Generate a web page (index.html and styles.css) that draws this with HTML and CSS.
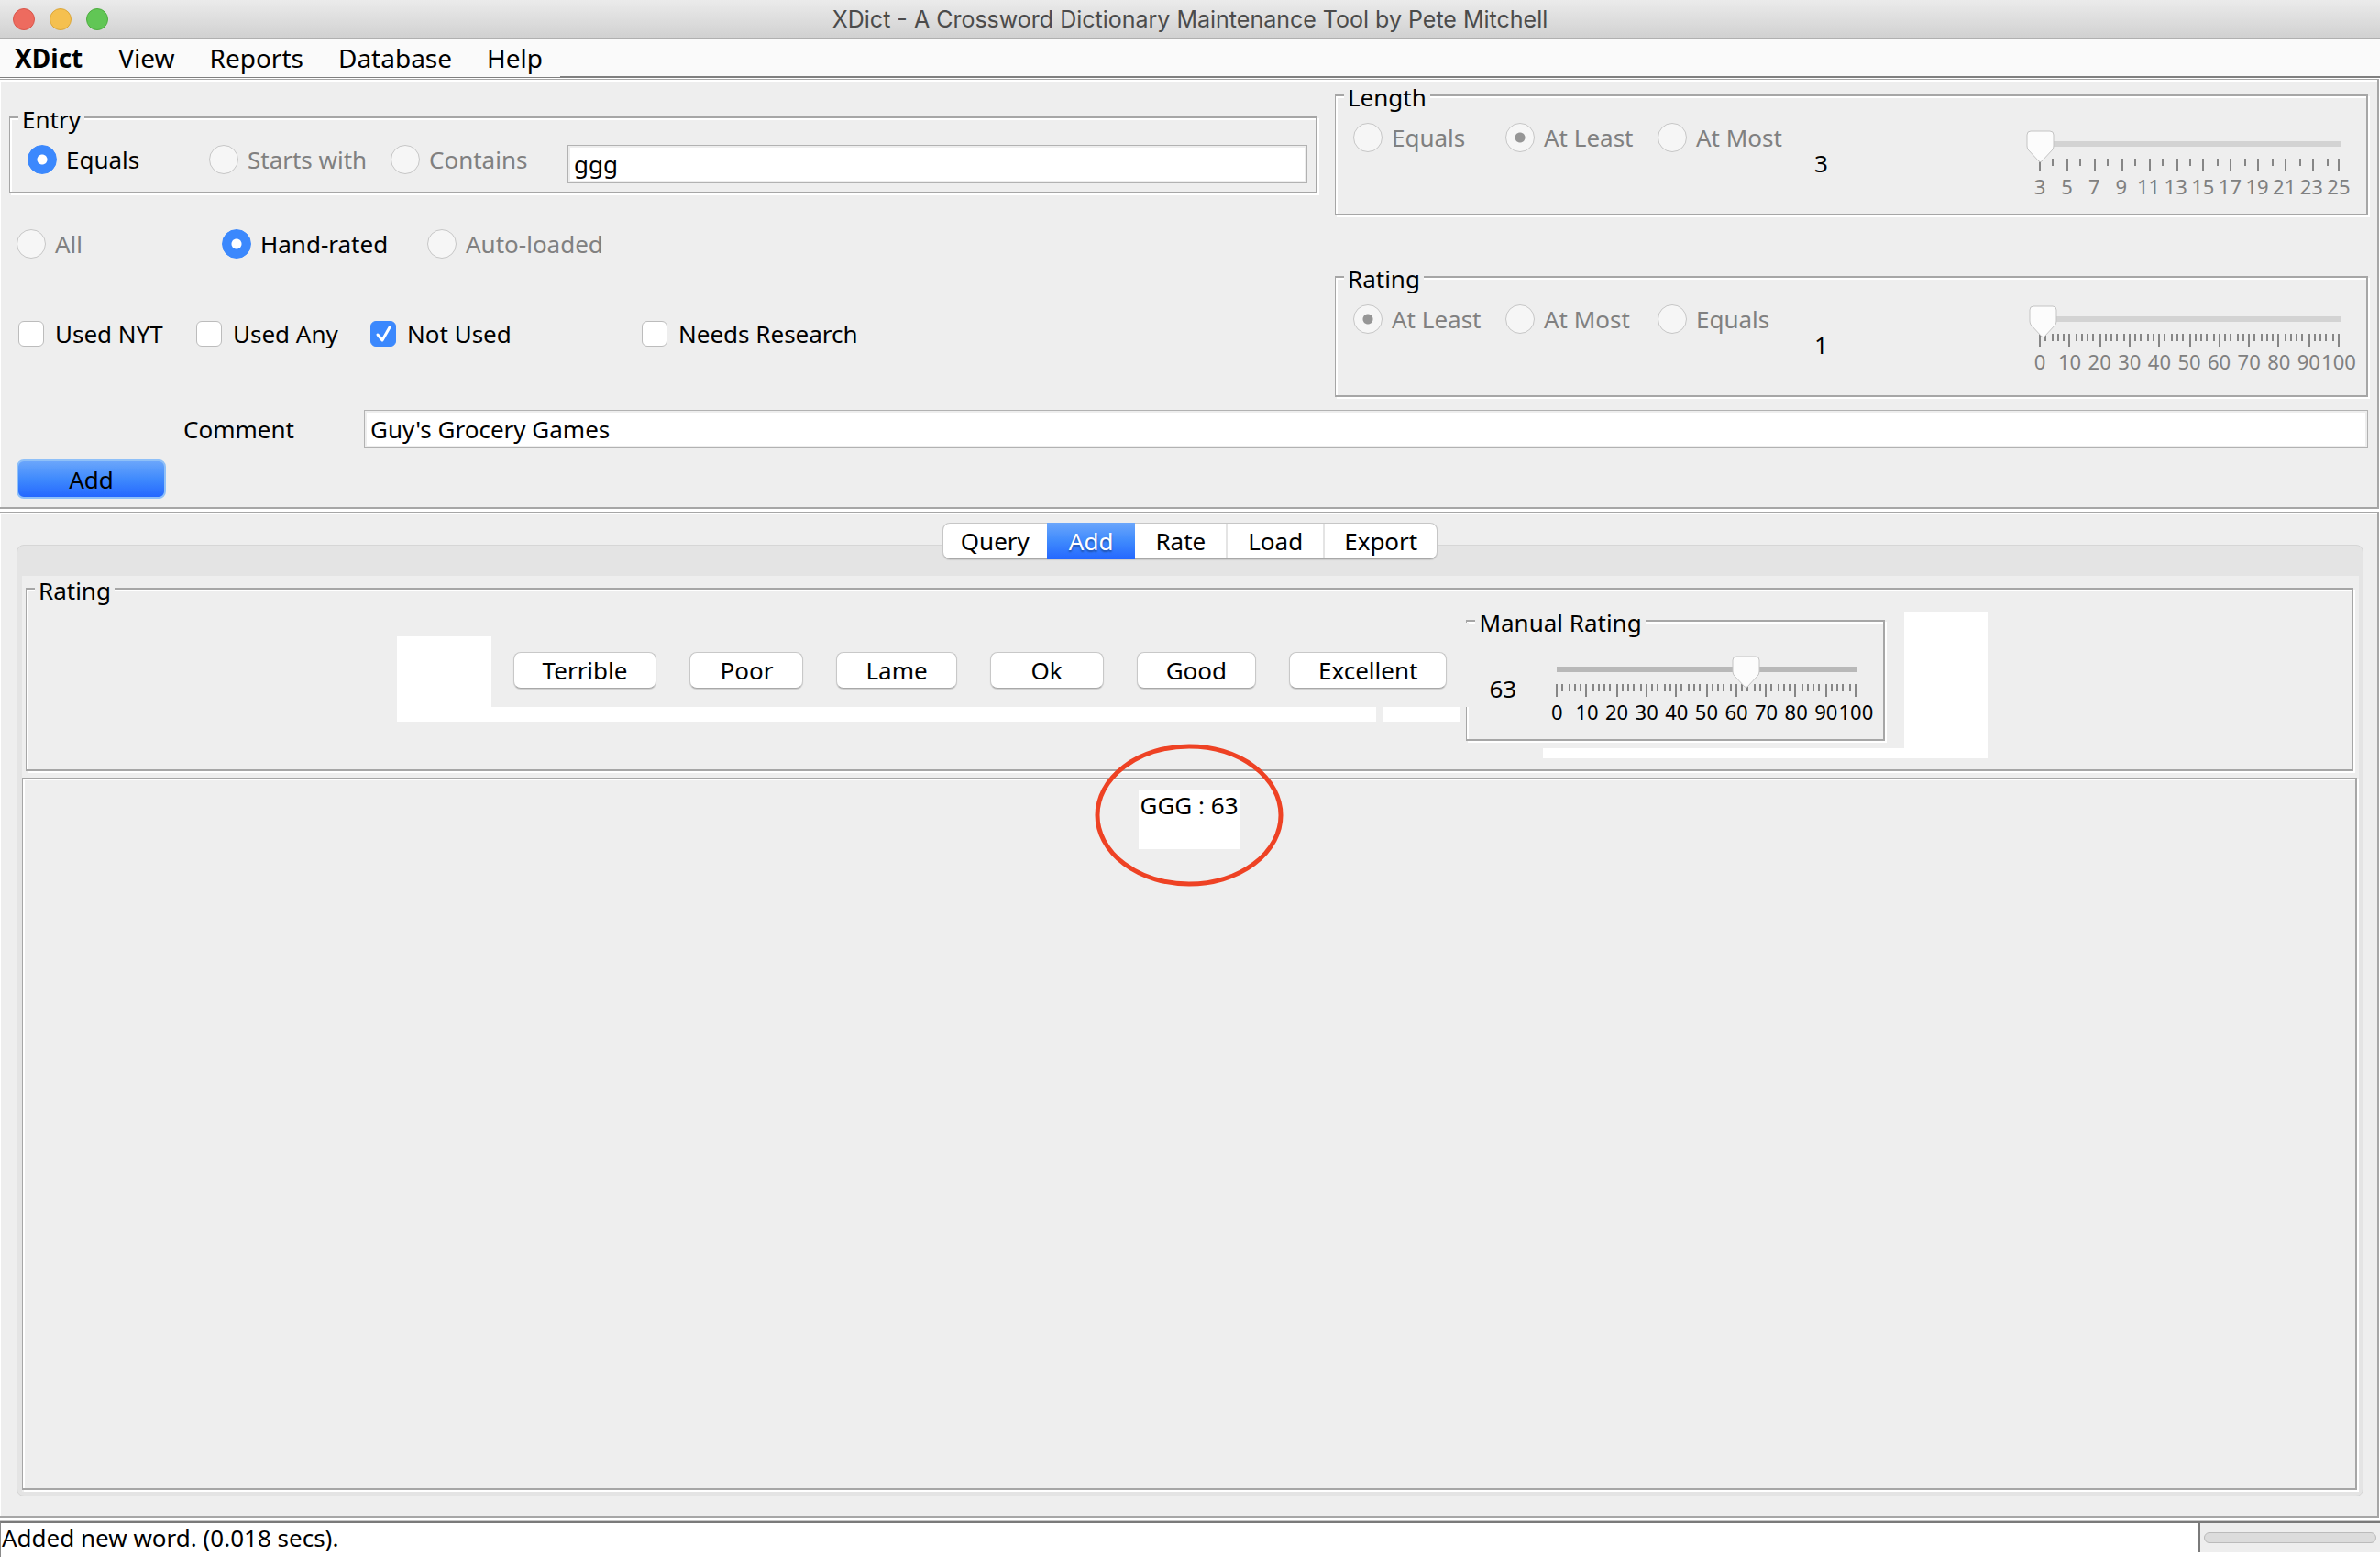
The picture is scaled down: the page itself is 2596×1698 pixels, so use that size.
FILE: index.html
```html
<!DOCTYPE html>
<html lang="en">
<head>
<meta charset="utf-8">
<title>XDict - A Crossword Dictionary Maintenance Tool by Pete Mitchell</title>
<link rel="stylesheet" href="styles.css">
</head>
<body>
<svg class="defs" aria-hidden="true">
  <symbol id="ticks-hundred" viewBox="0 0 328 14">
    <path d="M1 0v14M33 0v14M67 0v14M99 0v14M131 0v14M165 0v14M197 0v14M229 0v14M261 0v14M295 0v14M327 0v14M7 0v8M15 0v8M21 0v8M27 0v8M41 0v8M47 0v8M53 0v8M59 0v8M73 0v8M79 0v8M85 0v8M93 0v8M105 0v8M111 0v8M119 0v8M125 0v8M137 0v8M145 0v8M151 0v8M157 0v8M171 0v8M177 0v8M183 0v8M191 0v8M203 0v8M209 0v8M217 0v8M223 0v8M235 0v8M243 0v8M249 0v8M255 0v8M269 0v8M275 0v8M281 0v8M287 0v8M301 0v8M307 0v8M313 0v8M321 0v8"/>
  </symbol>
</svg>

<header class="titlebar">
  <div class="lights">
    <button class="light close" aria-label="Close"></button>
    <button class="light minimize" aria-label="Minimize"></button>
    <button class="light zoom" aria-label="Zoom"></button>
  </div>
  <h1 class="title">XDict - A Crossword Dictionary Maintenance Tool by Pete Mitchell</h1>
  <div class="lights-balance"></div>
</header>

<nav class="menubar">
  <button class="menu app">XDict</button>
  <button class="menu">View</button>
  <button class="menu">Reports</button>
  <button class="menu">Database</button>
  <button class="menu">Help</button>
  <span class="menu-fill"></span>
</nav>

<section class="panel filters">
  <div class="filter-grid">
    <div class="filter-left">
      <fieldset class="etched">
        <legend>Entry</legend>
        <div class="entry-row">
          <label class="option"><input type="radio" name="entry" checked><span>Equals</span></label>
          <label class="option"><input type="radio" name="entry" disabled><span>Starts with</span></label>
          <label class="option"><input type="radio" name="entry" disabled><span>Contains</span></label>
          <input class="text" type="text" value="ggg" aria-label="Entry">
        </div>
      </fieldset>
      <div class="source-row">
        <label class="option"><input type="radio" name="source" disabled><span>All</span></label>
        <label class="option"><input type="radio" name="source" checked><span>Hand-rated</span></label>
        <label class="option"><input type="radio" name="source" disabled><span>Auto-loaded</span></label>
      </div>
      <div class="usage-row">
        <label class="option"><input type="checkbox"><span>Used NYT</span></label>
        <label class="option"><input type="checkbox"><span>Used Any</span></label>
        <label class="option"><input type="checkbox" checked><span>Not Used</span></label>
        <label class="option"><input type="checkbox"><span>Needs Research</span></label>
      </div>
    </div>
    <div class="filter-right">
      <fieldset class="etched">
        <legend>Length</legend>
        <div class="range-row">
          <div class="range-options">
            <label class="option"><input type="radio" name="length" disabled><span>Equals</span></label>
            <label class="option"><input type="radio" name="length" disabled checked><span>At Least</span></label>
            <label class="option"><input type="radio" name="length" disabled><span>At Most</span></label>
          </div>
          <output class="value">3</output>
          <div class="slider">
            <input type="range" min="3" max="25" value="3" disabled aria-label="Length">
            <svg class="ticks" viewBox="0 0 328 14" aria-hidden="true"><path d="M1 0v14M31 0v14M61 0v14M91 0v14M121 0v14M151 0v14M179 0v14M209 0v14M239 0v14M269 0v14M299 0v14M327 0v14M15 0v8M45 0v8M75 0v8M105 0v8M135 0v8M165 0v8M195 0v8M225 0v8M255 0v8M285 0v8M315 0v8"/></svg>
            <div class="scale"><span>3</span><span>5</span><span>7</span><span>9</span><span>11</span><span>13</span><span>15</span><span>17</span><span>19</span><span>21</span><span>23</span><span>25</span></div>
          </div>
        </div>
      </fieldset>
      <fieldset class="etched">
        <legend>Rating</legend>
        <div class="range-row">
          <div class="range-options">
            <label class="option"><input type="radio" name="rating" disabled checked><span>At Least</span></label>
            <label class="option"><input type="radio" name="rating" disabled><span>At Most</span></label>
            <label class="option"><input type="radio" name="rating" disabled><span>Equals</span></label>
          </div>
          <output class="value">1</output>
          <div class="slider raised">
            <input type="range" min="0" max="100" value="1" disabled aria-label="Rating">
            <svg class="ticks" aria-hidden="true"><use href="#ticks-hundred"/></svg>
            <div class="scale"><span>0</span><span>10</span><span>20</span><span>30</span><span>40</span><span>50</span><span>60</span><span>70</span><span>80</span><span>90</span><span>100</span></div>
          </div>
        </div>
      </fieldset>
    </div>
  </div>
  <div class="comment-row">
    <label for="comment">Comment</label>
    <input class="text" id="comment" type="text" value="Guy's Grocery Games">
  </div>
  <button class="submit">Add</button>
</section>

<main class="panel work">
  <div class="tabs" role="tablist">
    <button class="tab" role="tab">Query</button>
    <button class="tab active" role="tab" aria-selected="true">Add</button>
    <button class="tab" role="tab">Rate</button>
    <button class="tab" role="tab">Load</button>
    <button class="tab" role="tab">Export</button>
  </div>
  <div class="pane">
    <div class="pane-body">
      <fieldset class="etched rating-box">
        <legend>Rating</legend>
        <div class="rating-row">
          <div class="scores">
            <div class="scores-top">
              <div class="blank-block"></div>
              <div class="score-buttons">
                <button class="push">Terrible</button>
                <button class="push">Poor</button>
                <button class="push">Lame</button>
                <button class="push">Ok</button>
                <button class="push">Good</button>
                <button class="push">Excellent</button>
              </div>
            </div>
            <div class="scores-strip"><span></span><span></span></div>
          </div>
          <div class="manual-area">
            <fieldset class="etched manual">
              <legend>Manual Rating</legend>
              <div class="manual-row">
                <output class="value">63</output>
                <div class="slider">
                  <input type="range" min="0" max="100" value="63" aria-label="Manual Rating">
                  <svg class="ticks" aria-hidden="true"><use href="#ticks-hundred"/></svg>
                  <div class="scale"><span>0</span><span>10</span><span>20</span><span>30</span><span>40</span><span>50</span><span>60</span><span>70</span><span>80</span><span>90</span><span>100</span></div>
                </div>
              </div>
            </fieldset>
            <div class="manual-strip"></div>
          </div>
          <div class="blank-column"></div>
        </div>
      </fieldset>
      <div class="results">
        <p class="result">GGG : 63
          <svg class="mark" viewBox="0 0 206 156" aria-hidden="true"><ellipse cx="103" cy="78" rx="100" ry="75" fill="none" stroke="#ee4224" stroke-width="5"/></svg>
        </p>
      </div>
    </div>
  </div>
</main>

<footer class="status">
  <div class="message" role="status">Added new word. (0.018 secs).</div>
  <div class="progress-well"><div class="progress" role="progressbar" aria-label="Progress"></div></div>
</footer>
</body>
</html>
```
FILE: styles.css
```css
* { box-sizing: border-box; }

body {
  margin: 0;
  min-height: 100vh;
  display: flex;
  flex-direction: column;
  background: #fff;
  color: #000;
  font: 26px/32px "Noto Sans", sans-serif;
}

button, input { font: inherit; color: inherit; margin: 0; }
button { padding: 0; border: 0; background: none; }
.defs { position: absolute; width: 0; height: 0; }

/* Title bar */
.titlebar {
  display: flex;
  align-items: center;
  justify-content: space-between;
  height: 42px;
  padding: 0 14px;
  background: linear-gradient(#ebebeb, #d1d1d1);
  border-bottom: 1px solid #b0b0b0;
}
.lights, .lights-balance { display: flex; gap: 16px; width: 104px; }
.light { width: 24px; height: 24px; border-radius: 50%; border: 1px solid; }
.close { background: #ed6b5f; border-color: #d9564b; }
.minimize { background: #f5c04f; border-color: #dba73b; }
.zoom { background: #61c655; border-color: #4dad3f; }
.title { margin: 0; color: #4b4b4b; font: 400 25px/32px Inter, sans-serif; }

/* Menu bar */
.menubar {
  display: flex;
  height: 43px;
  margin-bottom: 1px;
  background: #fafafa;
  border-bottom: 1px solid #7f7f7f;
}
.menu { padding: 0 19px; font-size: 28px; }
.app { padding: 0 20px 0 16px; font-weight: 700; }
.menu-fill { flex: 1; border-bottom: 1px solid #7f7f7f; }

/* Etched panels */
.panel {
  margin-right: 1px;
  background: #eee;
  border: solid #a6a6a6;
  border-width: 1px 2px 2px 0;
  box-shadow: inset 1px 2px #fff;
}
.etched {
  min-width: 0;
  margin: 0;
  padding: 0;
  border: 2px solid #a6a6a6;
  border-left-width: 1px;
  box-shadow: 2px 2px #fff, inset 2px 2px #fff;
}
legend {
  height: 28px;
  margin-left: 9px;
  padding: 2px 4px 0;
  background: #eee;
  line-height: 28px;
}

/* Radio buttons, tick boxes and text fields */
.option { display: flex; align-items: center; white-space: nowrap; }
.option input { appearance: none; flex: none; }
.option input:disabled + span { color: #808080; }
input[type="radio"] {
  width: 32px;
  height: 32px;
  margin-right: 10px;
  border-radius: 50%;
  border: 1px solid #c6c6c6;
  background: #f6f6f6;
}
input[type="radio"]:checked {
  border-color: #3b88fd;
  background: radial-gradient(circle, #fff 5px, #3b88fd 6px);
}
input[type="radio"]:checked:disabled {
  border-color: #c6c6c6;
  background: radial-gradient(circle, #969696 5px, #f6f6f6 6px);
}
input[type="checkbox"] {
  width: 28px;
  height: 28px;
  margin-right: 12px;
  border: 1px solid #bcbcbc;
  border-radius: 6px;
  background: #fff;
}
input[type="checkbox"]:checked {
  border-color: #3b88fd;
  background: #3b88fd url("data:image/svg+xml,%3Csvg xmlns='http://www.w3.org/2000/svg' viewBox='0 0 26 26'%3E%3Cpath d='M7 14l5 6L20 6' fill='none' stroke='white' stroke-width='3' stroke-linecap='round' stroke-linejoin='round'/%3E%3C/svg%3E");
}
.text {
  min-width: 0;
  height: 42px;
  padding: 0 6px;
  border: 1px solid #b2b2b2;
  border-radius: 0;
  background: #fff;
  box-shadow: inset 0 0 0 2px #eee;
}

/* Filters */
.filters { padding: 3px 10px 9px; margin-bottom: 3px; }
.filter-grid {
  display: grid;
  grid-template-columns: 1427fr 1127fr;
  gap: 19px;
}
.filter-left { padding-top: 24px; }
.entry-row {
  display: grid;
  grid-template-columns: 198px 198px 193px 1fr;
  align-items: start;
  padding: 16px 9px 9px 19px;
}
.source-row {
  display: grid;
  grid-template-columns: 224px 224px 1fr;
  margin-top: 39px;
  padding-left: 8px;
}
.usage-row {
  display: grid;
  grid-template-columns: 194px 190px 296px 1fr;
  margin-top: 66px;
  padding-left: 10px;
}
.filter-right { display: flex; flex-direction: column; gap: 53px; }
.range-row { display: flex; height: 115px; padding: 0 29px 0 19px; }
.range-options {
  display: grid;
  grid-template-columns: repeat(3, 166px);
  align-items: start;
  padding-top: 16px;
}
.value { flex: 1; padding: 46px 0 0 5px; line-height: 28px; }
.comment-row {
  display: flex;
  align-items: center;
  margin-top: 14px;
  padding-left: 190px;
}
.comment-row label { width: 197px; }
.comment-row .text { flex: 1; }
.submit {
  display: block;
  width: 163px;
  height: 43px;
  margin: 12px 0 0 8px;
  border: 2px solid #8fc0f8;
  border-radius: 8px;
  background: linear-gradient(#6ba6fb, #3f8afd 50%, #2467ff);
}

/* Sliders */
.slider { flex: none; width: 328px; padding-top: 25px; }
.raised { padding-top: 18px; }
.slider input {
  appearance: none;
  display: block;
  position: relative;
  z-index: 1;
  width: 357px;
  height: 28px;
  margin: 0 -14px 2px;
  background: linear-gradient(#b8b8b8, #b8b8b8) center / 328px 6px no-repeat;
}
.slider input:disabled { background-image: linear-gradient(#d3d3d3, #d3d3d3); }
.slider input::-webkit-slider-runnable-track { height: 6px; }
.slider input::-webkit-slider-thumb {
  appearance: none;
  width: 31px;
  height: 36px;
  margin-top: -12px;
  background: url("data:image/svg+xml,%3Csvg xmlns='http://www.w3.org/2000/svg' viewBox='0 0 31 36'%3E%3Cpath d='M5 1h21q4 0 4 4v12q0 2-1 4L17 34q-1.500 1-3 0L2 21q-1-2-1-4V5q0-4 4-4z' fill='%23fcfcfc' stroke='%23c4c4c4'/%3E%3C/svg%3E");
}
.ticks {
  display: block;
  width: 328px;
  height: 14px;
  fill: none;
  stroke: #868686;
  stroke-width: 2px;
}
.scale {
  display: flex;
  justify-content: space-between;
  margin: 3px 1px 0;
  font-size: 22px;
  line-height: 26px;
}
.scale span { display: flex; justify-content: center; width: 0; }
.slider input:disabled ~ .scale { color: #808080; }

/* Tabs */
.work {
  flex: 1;
  display: flex;
  flex-direction: column;
  padding: 11px 15px 21px 18px;
}
.tabs {
  position: relative;
  z-index: 1;
  align-self: center;
  display: flex;
  height: 40px;
  margin-bottom: -16px;
  border: 1px solid #c6c6c6;
  border-bottom-color: #a8a8a8;
  border-radius: 8px;
  background: #fff;
  box-shadow: 0 1px 1px #ccc;
}
.tab { padding: 0 22px; border-left: 2px solid #e4e4e4; }
.tab:first-child { padding: 0 19px; border-left: 0; }
.tab:last-child { padding: 0 21px; }
.tab.active {
  margin: -1px 0;
  padding: 0 24px;
  border-left: 0;
  color: #fff;
  background: linear-gradient(#6ba6fb, #3f8afd 50%, #2467ff);
  text-shadow: 0 2px 2px #1d4fa8;
}
.active + .tab { border-left: 0; }
.pane {
  flex: 1;
  display: flex;
  padding: 33px 4px 4px 5px;
  border: 1px solid #d6d6d6;
  border-radius: 8px;
  background: #e4e4e4;
}
.pane-body { flex: 1; display: flex; flex-direction: column; background: #eee; }

/* Rating controls */
.rating-box { margin: 0 6px 0 4px; }
.rating-row {
  display: flex;
  justify-content: center;
  padding: 7px 0 12px 7px;
}
.scores { padding-top: 31px; }
.scores-top { display: flex; }
.blank-block { width: 103px; background: #fff; }
.score-buttons { display: flex; gap: 36px; padding: 17px 21px 20px 24px; }
.push {
  min-width: 124px;
  height: 40px;
  padding: 0 31px;
  border: 1px solid #c8c8c8;
  border-bottom-color: #a8a8a8;
  border-radius: 8px;
  background: #fff;
  box-shadow: 0 1px 1px #ccc;
}
.scores-strip { display: flex; gap: 7px; height: 16px; padding-right: 7px; }
.scores-strip span { flex: 1; background: #fff; }
.scores-strip span:last-child { flex: none; width: 84px; }
.manual-area { width: 478px; }
.manual { position: relative; width: 457px; }
.manual::before {
  content: "";
  position: absolute;
  left: -1px;
  top: -12px;
  width: 3px;
  height: 92px;
  background: #eee;
}
.manual-row { display: flex; height: 115px; padding: 0 29px 0 22px; }
.manual-row .value { padding-left: 2px; }
.manual-strip { height: 11px; margin: 8px 0 0 84px; background: #fff; }
.blank-column { width: 91px; margin-top: 4px; background: #fff; }

/* Results */
.results {
  flex: 1;
  margin: 7px 2px 2px 0;
  padding-top: 13px;
  border: solid #a6a6a6;
  border-width: 1px 2px 2px 1px;
  box-shadow: 2px 2px #fff, inset 2px 2px #fff;
}
.result {
  position: relative;
  width: fit-content;
  margin: 0 auto;
  padding: 0 1px 32px;
  background: #fff;
}
.mark {
  position: absolute;
  top: -51px;
  left: calc(50% - 103px);
  width: 206px;
  height: 156px;
}

/* Status bar */
.status {
  display: flex;
  gap: 1px;
  height: 39px;
  margin-top: 4px;
}
.message {
  flex: 1;
  padding-left: 1px;
  border-top: 2px solid #7a7a7a;
  border-left: 1px solid #8a8a8a;
  box-shadow: 0 -1px #c8c8c8;
}
.progress-well {
  width: 198px;
  height: 34px;
  padding: 10px 4px 0;
  background: #eee;
  border-top: 2px solid #7a7a7a;
  border-left: 2px solid #7a7a7a;
  box-shadow: 0 -1px #c8c8c8;
}
.progress {
  height: 12px;
  border: 1px solid #bbb;
  border-radius: 6px;
  background: #dcdcdc;
}
```
